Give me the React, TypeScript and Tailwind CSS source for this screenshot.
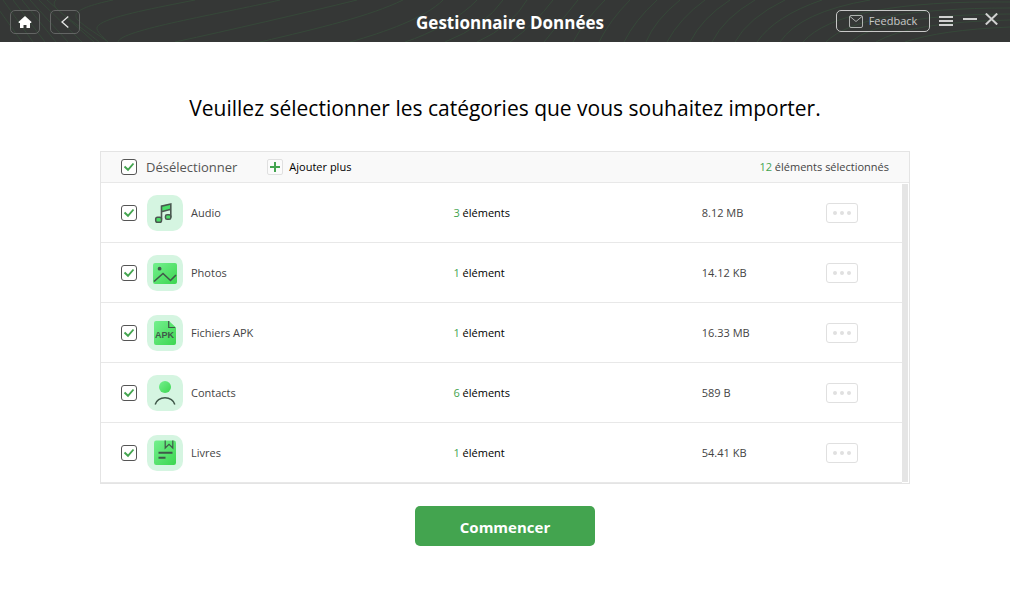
import { useState } from 'react';
import type { ReactNode } from 'react';

interface Category {
  id: string;
  label: string;
  count: number;
  size: string;
  icon: ReactNode;
}

function AudioIcon() {
  return (
    <svg viewBox="0 0 36 36" className="size-9" aria-hidden="true">
      <path d="M14.5 10.5 23.5 9v5l-9 2.5z" fill="#4ade68" />
      <path d="M14.5 24.5V11.2L23.8 9v13.5M14.5 16.8l9.3-2.6" fill="none" stroke="#4a5850" strokeWidth="1.6" />
      <rect x="8.7" y="22.2" width="5.8" height="5" rx="1.8" fill="#4ade68" stroke="#4a5850" strokeWidth="1.5" />
      <rect x="18.5" y="19.7" width="5.3" height="4.6" rx="1.6" fill="#4ade68" stroke="#4a5850" strokeWidth="1.5" />
    </svg>
  );
}

function PhotosIcon() {
  return (
    <svg viewBox="0 0 36 36" className="size-9" aria-hidden="true">
      <rect x="6" y="8" width="24" height="21" rx="2" fill="url(#green)" />
      <circle cx="12.6" cy="13.7" r="1.9" fill="#40584a" />
      <path d="m7 26.5 9-8 7.5 7 5.5-5.5" fill="none" stroke="#40584a" strokeWidth="1.6" />
    </svg>
  );
}

function ApkIcon() {
  return (
    <svg viewBox="0 0 36 36" className="size-9" aria-hidden="true">
      <path d="M9 6h13l7 6.5V28a2 2 0 0 1-2 2H9a2 2 0 0 1-2-2V8a2 2 0 0 1 2-2z" fill="url(#green)" />
      <path d="M21.7 6v6.5H28" fill="none" stroke="#40584a" strokeWidth="1.2" />
      <text x="17.5" y="22.5" textAnchor="middle" fill="#40584a" className="font-['Liberation_Sans'] text-[9px] font-bold">
        APK
      </text>
    </svg>
  );
}

function ContactsIcon() {
  return (
    <svg viewBox="0 0 36 36" className="size-9" aria-hidden="true">
      <circle cx="18" cy="12" r="6" fill="url(#green)" />
      <path d="M8.2 29.5a10 8.5 0 0 1 19.6 0" fill="none" stroke="#40584a" strokeWidth="1.5" />
    </svg>
  );
}

function BooksIcon() {
  return (
    <svg viewBox="0 0 36 36" className="size-9" aria-hidden="true">
      <rect x="7" y="5.5" width="22" height="24.5" rx="2.2" fill="url(#green)" />
      <path d="M18.2 5.5V13l3.8-3.600L25.800 13V5.500" fill="none" stroke="#40584a" strokeWidth="1.2" />
      <path d="M11.5 17.7h14M11.5 22.7h7" fill="none" stroke="#40584a" strokeWidth="1.9" />
    </svg>
  );
}

const CATEGORIES: Category[] = [
  { id: 'audio', label: 'Audio', count: 3, size: '8.12 MB', icon: <AudioIcon /> },
  { id: 'photos', label: 'Photos', count: 1, size: '14.12 KB', icon: <PhotosIcon /> },
  { id: 'apk', label: 'Fichiers APK', count: 1, size: '16.33 MB', icon: <ApkIcon /> },
  { id: 'contacts', label: 'Contacts', count: 6, size: '589 B', icon: <ContactsIcon /> },
  { id: 'books', label: 'Livres', count: 1, size: '54.41 KB', icon: <BooksIcon /> },
];

function Checkbox({ id, checked, onChange }: { id: string; checked: boolean; onChange: () => void }) {
  return (
    <span className="grid size-4 shrink-0">
      <input
        id={id}
        type="checkbox"
        checked={checked}
        onChange={onChange}
        className="peer col-start-1 row-start-1 size-4 appearance-none rounded-[3px] border border-[#555] bg-white"
      />
      <svg
        viewBox="0 0 16 16"
        aria-hidden="true"
        className="pointer-events-none invisible col-start-1 row-start-1 size-4 peer-checked:visible"
      >
        <path d="m3.5 7.5 3.5 3.3 5.5-6.300" fill="none" stroke="#43a44f" strokeWidth="1.9" />
      </svg>
    </span>
  );
}

// Contour lines behind the title bar
const CONTOURS = [
  'M-8 0 22 42M3 0 33 42M13 0 45 42M22 0 56 42M30 0 68 42M39 0 82 42M47 0 94 42',
  'M56 0C50 5 60 12 68 18S92 36 99 42',
  'M113 0C85 6 70 12 78 20S98 34 108 42',
  'M195 0C150 9 94 19 97 29C98 33 104 38 108 42',
  'M280 0C220 14 120 30 118 42',
  'M357 0C300 14 230 30 175 42',
  'M403 0C370 16 320 28 260 42',
  'M443 0C425 18 385 32 350 42',
  'M477 0C460 18 430 34 405 42',
  'M503 0Q485 26 445 42',
  'M527 0Q512 26 477 42',
  'M553 0Q535 24 510 42',
  'M578 0Q562 20 544 42',
  'M605 0Q585 20 573 42',
  'M630 0Q610 20 599 42',
  'M657 0Q635 20 624 42',
  'M680 0Q655 20 646 42',
  'M705 0Q680 18 667 42',
  'M730 0Q702 18 690 42',
  'M755 0Q724 18 712 42',
  'M785 0Q748 18 735 42',
  'M822 0Q775 16 757 42',
  'M870 0Q800 12 780 42',
  'M1010 2Q840 0 803 42',
  'M1010 8Q860 8 826 42',
  'M1010 14Q885 14 850 42',
  'M1010 20Q910 22 876 42',
  'M1010 27Q940 30 905 42',
];

function TitleBar() {
  return (
    <header className="relative bg-[#353736]">
      <svg
        viewBox="0 0 1010 42"
        preserveAspectRatio="xMidYMid slice"
        aria-hidden="true"
        className="absolute inset-0 size-full"
        fill="none"
        stroke="#364839"
      >
        {CONTOURS.map((d) => (
          <path key={d} d={d} />
        ))}
      </svg>

      <div className="relative grid h-[42px] grid-cols-[1fr_auto_1fr] items-center pr-3 pl-2.5">
        <nav className="flex gap-2.5 pt-0.5">
          <button type="button" aria-label="Accueil" className="flex h-6 w-[30px] items-center justify-center rounded-[5px] border border-[#636564]">
            <svg viewBox="0 0 14 12" className="h-3 w-3.5" fill="#fff" aria-hidden="true">
              <path d="m7 0 6.6 6-.6 1h-1v5H8.500V9h-3v3H2V7H1L.4 6z" />
            </svg>
          </button>
          <button type="button" aria-label="Retour" className="flex h-6 w-[30px] items-center justify-center rounded-[5px] border border-[#636564]">
            <svg viewBox="0 0 8 12" className="h-3 w-2" fill="none" stroke="#e6e6e6" strokeWidth="1.3" aria-hidden="true">
              <path d="M7.3.5 1 6l6.300 5.500" />
            </svg>
          </button>
        </nav>

        <h1 className="pt-1 pl-3 text-[17px] leading-6 font-bold text-white">Gestionnaire Données</h1>

        <div className="flex items-center justify-end">
          <button type="button" className="mr-[9px] flex h-[22px] w-[94px] items-center justify-center gap-1.5 rounded-[5px] border border-[#c8c8c8] text-[11px] text-[#c8c8c8]">
            <svg viewBox="0 0 14 13" className="h-[13px] w-3.5" fill="none" stroke="#b0b2b1" aria-hidden="true">
              <rect x=".5" y=".5" width="13" height="12" rx="1.5" />
              <path d="m1 1.500 6 5 6-5" />
            </svg>
            Feedback
          </button>
          <button type="button" aria-label="Menu" className="mr-2.5">
            <svg viewBox="0 0 14 10" className="h-2.5 w-3.5" fill="#d0d0d0" aria-hidden="true">
              <path d="M0 0h14v2H0zM0 4h14v2H0zM0 8h14v2H0z" />
            </svg>
          </button>
          <button type="button" aria-label="Réduire" className="mr-2 pb-1">
            <svg viewBox="0 0 14 2" className="h-0.5 w-3.5" fill="#d0d0d0" aria-hidden="true">
              <path d="M0 0h14v2H0z" />
            </svg>
          </button>
          <button type="button" aria-label="Fermer" className="pb-1">
            <svg viewBox="0 0 13 12" className="h-3 w-[13px]" stroke="#d0d0d0" strokeWidth="2" aria-hidden="true">
              <path d="m.8.5 11.400 11M12.200.5.8 11.500" />
            </svg>
          </button>
        </div>
      </div>
    </header>
  );
}

export default function App() {
  const [selected, setSelected] = useState<string[]>(CATEGORIES.map((c) => c.id));

  const allSelected = selected.length === CATEGORIES.length;
  const total = CATEGORIES.filter((c) => selected.includes(c.id)).reduce((sum, c) => sum + c.count, 0);

  const toggle = (id: string) => {
    setSelected((prev) => (prev.includes(id) ? prev.filter((s) => s !== id) : [...prev, id]));
  };

  const toggleAll = () => {
    setSelected(allSelected ? [] : CATEGORIES.map((c) => c.id));
  };

  return (
    <div className="min-h-screen bg-white font-['Open_Sans',sans-serif] text-[11px] leading-4 text-black">
      <svg className="absolute size-0" aria-hidden="true">
        <defs>
          <linearGradient id="green" x1="0" y1="0" x2="1" y2="1">
            <stop offset="0" stopColor="#74f08e" />
            <stop offset="1" stopColor="#3dd650" />
          </linearGradient>
        </defs>
      </svg>

      <TitleBar />

      <main className="flex flex-col px-[100px] pt-[50px]">
        <h2 className="text-center text-[21px] leading-8">Veuillez sélectionner les catégories que vous souhaitez importer.</h2>

        <section className="mt-[27px] border border-[#e4e4e4]">
          <div className="flex h-[31px] items-center border-b border-[#e8e8e8] bg-[#f9f9f9] px-5">
            <Checkbox id="select-all" checked={allSelected} onChange={toggleAll} />
            <label htmlFor="select-all" className="ml-[9px] text-[13px] text-[#555]">
              {allSelected ? 'Désélectionner' : 'Sélectionner'}
            </label>
            <button type="button" className="ml-[30px] flex items-center gap-1.5">
              <svg viewBox="0 0 16 16" className="size-4" aria-hidden="true">
                <rect x=".5" y=".5" width="15" height="15" rx="1.5" fill="#fbfbfb" stroke="#e0e0e0" />
                <path d="M3 8h10M8 3v10" stroke="#43a44f" strokeWidth="2" />
              </svg>
              Ajouter plus
            </button>
            <p className="ml-auto text-[#444]">
              <span className="text-[#43a44f]">{total}</span> éléments sélectionnés
            </p>
          </div>

          <div className="flex pr-px">
            <table className="w-full table-fixed border-separate border-spacing-0">
              <tbody>
                {CATEGORIES.map((category) => (
                  <tr key={category.id} className="h-[60px] *:border-b *:border-[#e8e8e8]">
                    <td className="w-[44%] pl-5">
                      <div className="flex items-center">
                        <Checkbox
                          id={category.id}
                          checked={selected.includes(category.id)}
                          onChange={() => toggle(category.id)}
                        />
                        <label htmlFor={category.id} className="ml-2.5 flex items-center gap-2 text-[#444]">
                          <span className="rounded-[10px] bg-[#d5f5e1]">{category.icon}</span>
                          {category.label}
                        </label>
                      </div>
                    </td>
                    <td className="w-[31%]">
                      <span className="text-[#43a44f]">{category.count}</span> {category.count > 1 ? 'éléments' : 'élément'}
                    </td>
                    <td className="text-[#444]">{category.size}</td>
                    <td className="w-[76px]">
                      <button
                        type="button"
                        aria-label={`Détails ${category.label}`}
                        className="flex h-5 w-8 items-center justify-center gap-[3px] rounded-[3px] border border-[#e0e0e0]"
                      >
                        <span className="size-1 rounded-full bg-[#e0e0e0]" />
                        <span className="size-1 rounded-full bg-[#e0e0e0]" />
                        <span className="size-1 rounded-full bg-[#e0e0e0]" />
                      </button>
                    </td>
                  </tr>
                ))}
              </tbody>
            </table>
            <div className="my-px w-1.5 shrink-0 bg-[#e5e5e5]" />
          </div>
        </section>

        <button type="button" className="mt-[22px] h-10 w-[180px] self-center rounded-[5px] bg-[#43a44f] pt-0.5 text-[15px] font-bold text-white">
          Commencer
        </button>
      </main>
    </div>
  );
}
